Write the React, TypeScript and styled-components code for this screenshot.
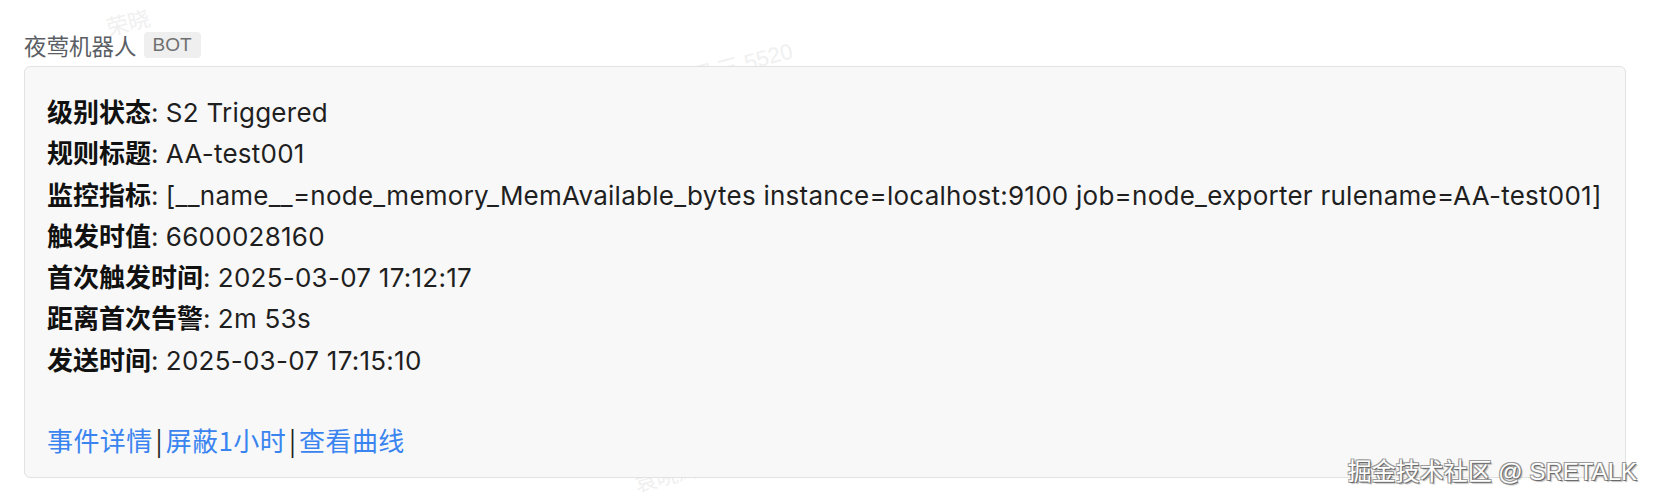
import React from "react";
import styled, { createGlobalStyle } from "styled-components";

const GlobalStyle = createGlobalStyle`
  html, body {
    margin: 0;
    padding: 0;
    background: #ffffff;
  }
  body {
    font-family: "Inter", "Noto Sans CJK SC", sans-serif;
  }
`;

const Page = styled.div`
  position: relative;
  box-sizing: border-box;
  width: 1654px;
  height: 504px;
  overflow: hidden;
  display: flex;
  flex-direction: column;
  gap: 6px;
  padding: 30px 28px 0 24px;
  background: #ffffff;
`;

const Header = styled.div`
  display: flex;
  align-items: center;
  gap: 7px;
  height: 30px;
  position: relative;
  z-index: 2;
`;

const BotName = styled.span`
  font-family: "Noto Sans CJK SC", sans-serif;
  font-size: 22.5px;
  color: #5a5e64;
  line-height: 30px;
`;

const BotTag = styled.span`
  font-family: "Liberation Sans", "Noto Sans CJK SC", sans-serif;
  font-size: 19px;
  color: #6f6f6f;
  background: #efefef;
  border-radius: 4px;
  height: 26px;
  line-height: 26px;
  padding: 0 9px;
`;

const Card = styled.div`
  position: relative;
  z-index: 1;
  box-sizing: border-box;
  height: 412px;
  display: flex;
  flex-direction: column;
  border: 1px solid #e2e2e2;
  border-radius: 6px;
  background: #f8f8f8;
  padding: 23px 22px 15px 22px;
  font-family: "Inter", "Noto Sans CJK SC", sans-serif;
  font-size: 26px;
  color: #1f1f1f;
`;

const Row = styled.div`
  height: 41.3px;
  line-height: 41.3px;
  white-space: nowrap;
`;

const Label = styled.strong`
  font-family: "Noto Sans CJK SC", sans-serif;
  font-weight: 700;
  color: #111111;
`;

const Value = styled.span`
  letter-spacing: 0.25px;
`;

const Actions = styled.div`
  margin-top: 40px;
  height: 41.5px;
  line-height: 41.5px;
  white-space: nowrap;
  font-family: "Noto Sans CJK SC", sans-serif;
`;

const ActionLink = styled.a`
  color: #3a84f0;
  text-decoration: none;
  letter-spacing: 0.4px;
`;

const Sep = styled.span`
  color: #1f1f1f;
  margin: 0 3px;
`;

const Credit = styled.div`
  position: absolute;
  right: 17px;
  bottom: 17px;
  z-index: 3;
  font-family: "Liberation Sans", "Noto Sans CJK SC", sans-serif;
  font-size: 24px;
  line-height: 30px;
  color: #ffffff;
  text-shadow: 1px 1px 0 #6a6a6a, -1px -1px 0 #9a9a9a, 1px -1px 0 #9a9a9a,
    -1px 1px 0 #9a9a9a, 2px 2px 1px rgba(0, 0, 0, 0.25);
  white-space: nowrap;
`;

const Watermark = styled.div<{ $x: number; $y: number }>`
  position: absolute;
  left: ${(p) => p.$x}px;
  top: ${(p) => p.$y}px;
  z-index: 0;
  transform: rotate(-15deg);
  transform-origin: left top;
  font-family: "Liberation Sans", "Noto Sans CJK SC", sans-serif;
  font-size: 22px;
  line-height: 24px;
  color: #f0f0f0;
  white-space: nowrap;
  pointer-events: none;
`;

const rows: Array<[string, string]> = [
  ["级别状态", "S2 Triggered"],
  ["规则标题", "AA-test001"],
  [
    "监控指标",
    "[__name__=node_memory_MemAvailable_bytes instance=localhost:9100 job=node_exporter rulename=AA-test001]",
  ],
  ["触发时值", "6600028160"],
  ["首次触发时间", "2025-03-07 17:12:17"],
  ["距离首次告警", "2m 53s"],
  ["发送时间", "2025-03-07 17:15:10"],
];

export default function App() {
  return (
    <>
      <GlobalStyle />
      <Page>
        <Watermark $x={104} $y={18}>荣晓</Watermark>
        <Watermark $x={645} $y={78}>袁晓辉 三 5520</Watermark>
        <Watermark $x={632} $y={474}>袁晓辉 @ 伙伴</Watermark>
        <Header>
          <BotName>夜莺机器人</BotName>
          <BotTag>BOT</BotTag>
        </Header>
        <Card>
          {rows.map(([label, value]) => (
            <Row key={label}>
              <Label>{label}</Label>: <Value>{value}</Value>
            </Row>
          ))}
          <Actions>
            <ActionLink href="#">事件详情</ActionLink>
            <Sep>|</Sep>
            <ActionLink href="#">屏蔽1小时</ActionLink>
            <Sep>|</Sep>
            <ActionLink href="#">查看曲线</ActionLink>
          </Actions>
        </Card>
        <Credit>掘金技术社区 @ SRETALK</Credit>
      </Page>
    </>
  );
}
